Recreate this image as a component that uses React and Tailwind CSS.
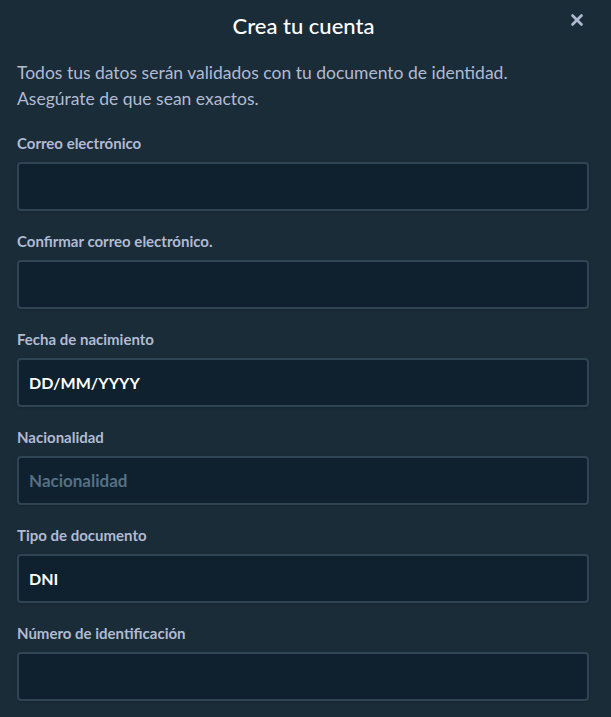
import { X } from 'lucide-react';

const fields = [
  { label: 'Correo electrónico', value: '' },
  { label: 'Confirmar correo electrónico.', value: '' },
  { label: 'Fecha de nacimiento', value: 'DD/MM/YYYY' },
  { label: 'Nacionalidad', placeholder: 'Nacionalidad' },
  { label: 'Tipo de documento', value: 'DNI' },
  { label: 'Número de identificación', value: '' },
];

function Field({ label, value, placeholder }) {
  return (
    <div className="flex flex-col">
      <label className="text-[15px] font-bold leading-[20px] text-[#b1bad3]">{label}</label>
      <div className="mt-[9px] h-[49px] rounded-[4px] border-2 border-[#2f4553] bg-[#0f212e] px-[10px] flex items-center shadow-sm">
        {value ? (
          <span className="text-[16px] font-bold text-white">{value}</span>
        ) : placeholder ? (
          <span className="text-[17px] font-bold text-[#557086]">{placeholder}</span>
        ) : null}
      </div>
    </div>
  );
}

export default function App() {
  return (
    <div
      className="w-[611px] h-[717px] overflow-hidden bg-[#1a2c38]"
      style={{ fontFamily: 'Lato, "Open Sans", sans-serif' }}
    >
      <div className="relative flex h-[50px] items-center justify-center">
        <h1 className="mr-[4px] text-[22px] font-medium text-white">Crea tu cuenta</h1>
        <button className="absolute right-[25px] top-[11px] text-[#b1bad3]">
          <X className="h-[18px] w-[18px]" strokeWidth={3.5} />
        </button>
      </div>
      <div className="pl-[17px] pr-[22px] pt-[10px]">
        <p className="text-[17.5px] leading-[26px] text-[#b1bad3]">
          Todos tus datos serán validados con tu documento de identidad.
          <br />
          Asegúrate de que sean exactos.
        </p>
        <div className="mt-[21px] flex flex-col gap-[20px]">
          {fields.map((f) => (
            <Field key={f.label} {...f} />
          ))}
        </div>
      </div>
    </div>
  );
}
